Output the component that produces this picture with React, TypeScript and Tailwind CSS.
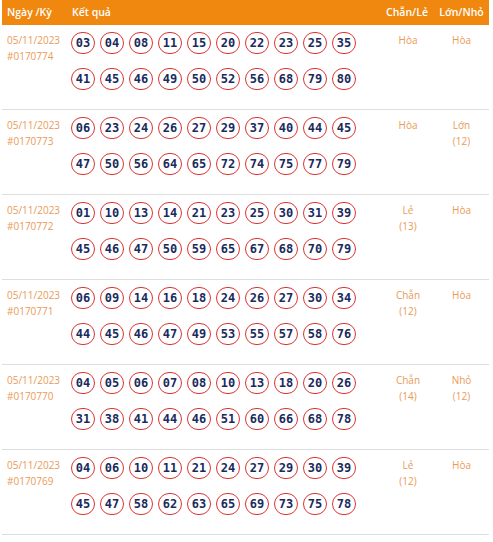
const rows = [
  {
    date: '05/11/2023',
    ky: '#0170774',
    balls: ['03', '04', '08', '11', '15', '20', '22', '23', '25', '35', '41', '45', '46', '49', '50', '52', '56', '68', '79', '80'],
    chanLe: ['Hòa'],
    lonNho: ['Hòa'],
  },
  {
    date: '05/11/2023',
    ky: '#0170773',
    balls: ['06', '23', '24', '26', '27', '29', '37', '40', '44', '45', '47', '50', '56', '64', '65', '72', '74', '75', '77', '79'],
    chanLe: ['Hòa'],
    lonNho: ['Lớn', '(12)'],
  },
  {
    date: '05/11/2023',
    ky: '#0170772',
    balls: ['01', '10', '13', '14', '21', '23', '25', '30', '31', '39', '45', '46', '47', '50', '59', '65', '67', '68', '70', '79'],
    chanLe: ['Lẻ', '(13)'],
    lonNho: ['Hòa'],
  },
  {
    date: '05/11/2023',
    ky: '#0170771',
    balls: ['06', '09', '14', '16', '18', '24', '26', '27', '30', '34', '44', '45', '46', '47', '49', '53', '55', '57', '58', '76'],
    chanLe: ['Chẵn', '(12)'],
    lonNho: ['Hòa'],
  },
  {
    date: '05/11/2023',
    ky: '#0170770',
    balls: ['04', '05', '06', '07', '08', '10', '13', '18', '20', '26', '31', '38', '41', '44', '46', '51', '60', '66', '68', '78'],
    chanLe: ['Chẵn', '(14)'],
    lonNho: ['Nhỏ', '(12)'],
  },
  {
    date: '05/11/2023',
    ky: '#0170769',
    balls: ['04', '06', '10', '11', '21', '24', '27', '29', '30', '39', '45', '47', '58', '62', '63', '65', '69', '73', '75', '78'],
    chanLe: ['Lẻ', '(12)'],
    lonNho: ['Hòa'],
  },
]

function Ball({ n }: { n: string }) {
  return (
    <span className="flex h-[22px] w-[24px] items-center justify-center rounded-full border-[1.5px] border-[#dc3333] font-['DejaVu_Sans_Mono',monospace] text-[12px] font-bold leading-none text-[#1a2a5c]">
      {n}
    </span>
  )
}

export default function App() {
  return (
    <div className="ml-[2px] w-[487px] bg-white font-['Open_Sans',sans-serif]">
      <div className="grid h-[25px] grid-cols-[69px_309px_54px_55px] items-center bg-[#f0870e] text-[10.5px] font-semibold text-white">
        <div className="pl-[5px]">Ngày /Kỳ</div>
        <div className="pl-px">Kết quả</div>
        <div className="text-center">Chẵn/Lẻ</div>
        <div className="text-center">Lớn/Nhỏ</div>
      </div>
      {rows.map((r) => (
        <div
          key={r.ky}
          className="grid grid-cols-[69px_311px_52px_55px] border-b border-[#dedede] pt-[7px] pb-[19px] text-[10px] leading-[16px] text-[#ea9a58]"
        >
          <div className="pl-[5px]">
            <div>{r.date}</div>
            <div>{r.ky}</div>
          </div>
          <div className="flex flex-col gap-[14px]">
            <div className="flex gap-[5px]">
              {r.balls.slice(0, 10).map((b, i) => (
                <Ball key={i} n={b} />
              ))}
            </div>
            <div className="flex gap-[5px]">
              {r.balls.slice(10).map((b, i) => (
                <Ball key={i} n={b} />
              ))}
            </div>
          </div>
          <div className="text-center">
            {r.chanLe.map((t) => (
              <div key={t}>{t}</div>
            ))}
          </div>
          <div className="text-center">
            {r.lonNho.map((t) => (
              <div key={t}>{t}</div>
            ))}
          </div>
        </div>
      ))}
    </div>
  )
}
